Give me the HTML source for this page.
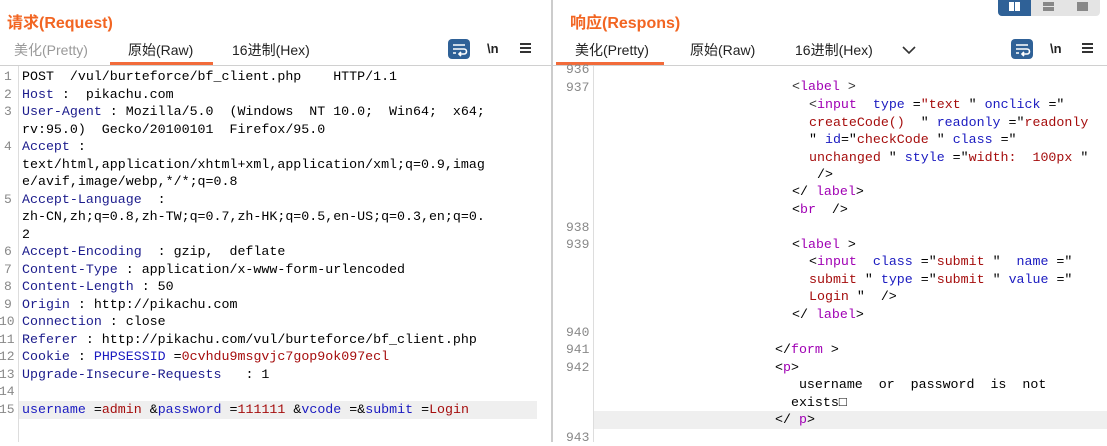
<!DOCTYPE html>
<html><head><meta charset="utf-8"><style>
*{margin:0;padding:0;box-sizing:border-box}
body{width:1107px;height:442px;background:#fff;position:relative;overflow:hidden;font-family:"Liberation Sans","Noto Sans CJK SC",sans-serif}
.abs{position:absolute}
.title{color:#f26522;font-weight:bold;font-size:16px;top:9px}
.tab{font-size:14px;top:40px;color:#222}
.code{font-family:"Liberation Mono",monospace;font-size:13.3px;white-space:pre;line-height:17.5px;position:absolute}
.ln{font-family:"Liberation Mono",monospace;font-size:13px;color:#888;position:absolute;line-height:17.5px}
.k{color:#1c1c8c}.v{color:#a50d0d}.t{color:#a000b4}.a{color:#1a1ac0}.p{color:#333}
.wrap{width:22px;height:20px;background:#2f6197;border-radius:4px}
</style></head><body>
<!-- left panel -->
<div class="abs title" style="left:7px">请求(Request)</div>
<div class="abs tab" style="left:14px;color:#999">美化(Pretty)</div>
<div class="abs tab" style="left:128px">原始(Raw)</div>
<div class="abs tab" style="left:232px">16进制(Hex)</div>
<div class="abs" style="left:110px;top:62px;width:103px;height:3px;background:#f26b3a"></div>
<div class="abs wrap" style="left:448px;top:39px"><svg width="22" height="20"><path d="M5 6h12M5 10h11a2.5 2.5 0 0 1 0 5h-5M13 13l-2 2 2 2M5 14h3" stroke="#fff" stroke-width="1.6" fill="none"/></svg></div>
<div class="abs" style="left:487px;top:41px;font-size:13px;font-weight:bold;color:#222">\n</div>
<div class="abs" style="left:520px;top:43px;width:11px;height:10px;border-top:2px solid #333;border-bottom:2px solid #333"><div style="margin-top:2px;height:2px;background:#333"></div></div>
<div class="abs" style="left:0;top:65px;width:552px;height:1px;background:#d0d0d0"></div>
<div class="abs" style="left:18px;top:66px;width:1px;height:376px;background:#ddd"></div>
<div class="abs" style="left:19px;top:401px;width:518px;height:18px;background:#efefef"></div>
<div class="abs" style="left:551px;top:0;width:2px;height:442px;background:#ccc"></div>
<div class="ln" style="left:4px;top:68px">1<br>2<br>3<br><br>4<br><br><br>5<br><br><br>6<br>7<br>8<br>9</div>
<div class="ln" style="left:-1px;top:313px">10<br>11<br>12<br>13<br>14<br>15</div>
<div class="code" style="left:22px;top:68px">POST  /vul/burteforce/bf_client.php    HTTP/1.1
<span class="k">Host</span> :  pikachu.com
<span class="k">User-Agent</span> : Mozilla/5.0  (Windows  NT 10.0;  Win64;  x64;
rv:95.0)  Gecko/20100101  Firefox/95.0
<span class="k">Accept</span> :
text/html,application/xhtml+xml,application/xml;q=0.9,imag
e/avif,image/webp,*/*;q=0.8
<span class="k">Accept-Language</span>  :
zh-CN,zh;q=0.8,zh-TW;q=0.7,zh-HK;q=0.5,en-US;q=0.3,en;q=0.
2
<span class="k">Accept-Encoding</span>  : gzip,  deflate
<span class="k">Content-Type</span> : application/x-www-form-urlencoded
<span class="k">Content-Length</span> : 50
<span class="k">Origin</span> : http://pikachu.com
<span class="k">Connection</span> : close
<span class="k">Referer</span> : http://pikachu.com/vul/burteforce/bf_client.php
<span class="k">Cookie</span> : <span class="a">PHPSESSID</span> =<span class="v">0cvhdu9msgvjc7gop9ok097ecl</span>
<span class="k">Upgrade-Insecure-Requests</span>   : 1

<span class="a">username</span> =<span class="v">admin</span> &amp;<span class="a">password</span> =<span class="v">111111</span> &amp;<span class="a">vcode</span> =&amp;<span class="a">submit</span> =<span class="v">Login</span></div>

<!-- right panel -->
<div class="abs" style="left:998px;top:0;width:102px;height:16px;background:#e4e4e4;border-radius:0 0 4px 4px"></div>
<div class="abs" style="left:998px;top:0;width:33px;height:16px;background:#2f6197;border-radius:0 0 0 4px"></div>
<div class="abs" style="left:1009px;top:2px;width:5px;height:9px;background:#fff"></div>
<div class="abs" style="left:1015px;top:2px;width:5px;height:9px;background:#fff"></div>
<div class="abs" style="left:1043px;top:2px;width:11px;height:4px;background:#888"></div>
<div class="abs" style="left:1043px;top:7px;width:11px;height:4px;background:#888"></div>
<div class="abs" style="left:1077px;top:2px;width:11px;height:9px;background:#888"></div>
<div class="abs title" style="left:570px">响应(Respons)</div>
<div class="abs tab" style="left:575px">美化(Pretty)</div>
<div class="abs tab" style="left:690px">原始(Raw)</div>
<div class="abs tab" style="left:795px">16进制(Hex)</div>
<div class="abs" style="left:901px;top:43px"><svg width="16" height="12"><path d="M2 3l6 6 6-6" stroke="#333" stroke-width="1.6" fill="none"/></svg></div>
<div class="abs" style="left:556px;top:62px;width:108px;height:3px;background:#f26b3a"></div>
<div class="abs wrap" style="left:1011px;top:39px"><svg width="22" height="20"><path d="M5 6h12M5 10h11a2.5 2.5 0 0 1 0 5h-5M13 13l-2 2 2 2M5 14h3" stroke="#fff" stroke-width="1.6" fill="none"/></svg></div>
<div class="abs" style="left:1050px;top:41px;font-size:13px;font-weight:bold;color:#222">\n</div>
<div class="abs" style="left:1082px;top:43px;width:11px;height:10px;border-top:2px solid #333;border-bottom:2px solid #333"><div style="margin-top:2px;height:2px;background:#333"></div></div>
<div class="abs" style="left:553px;top:65px;width:554px;height:1px;background:#d0d0d0"></div>
<div class="abs" style="left:593px;top:66px;width:1px;height:376px;background:#ddd"></div>
<div class="abs" style="left:594px;top:411px;width:513px;height:18px;background:#efefef"></div>
<div class="ln" style="left:566px;top:61px">936<br>937<br><br><br><br><br><br><br><br>938<br>939<br><br><br><br><br>940<br>941<br>942<br><br><br><br>943</div>
<div class="code" style="left:792px;top:78px"><span class="p">&lt;</span><span class="t">label</span> <span class="p">&gt;</span></div>
<div class="code" style="left:809px;top:96px"><span class="p">&lt;</span><span class="t">input</span>  <span class="a">type</span> =<span class="v">"text</span> " <span class="a">onclick</span> ="
<span class="v">createCode()</span>  " <span class="a">readonly</span> ="<span class="v">readonly</span>
" <span class="a">id</span>="<span class="v">checkCode</span> " <span class="a">class</span> ="
<span class="v">unchanged</span> " <span class="a">style</span> ="<span class="v">width:  100px</span> "
 /&gt;</div>
<div class="code" style="left:792px;top:183px">&lt;/ <span class="t">label</span>&gt;
&lt;<span class="t">br</span>  /&gt;

&lt;<span class="t">label</span> &gt;</div>
<div class="code" style="left:809px;top:253px">&lt;<span class="t">input</span>  <span class="a">class</span> ="<span class="v">submit</span> "  <span class="a">name</span> ="
<span class="v">submit</span> " <span class="a">type</span> ="<span class="v">submit</span> " <span class="a">value</span> ="
<span class="v">Login</span> "  /&gt;</div>
<div class="code" style="left:792px;top:306px">&lt;/ <span class="t">label</span>&gt;</div>
<div class="code" style="left:775px;top:341px">&lt;/<span class="t">form</span> &gt;
&lt;<span class="t">p</span>&gt;
   username  or  password  is  not
  exists&#9633;
&lt;/ <span class="t">p</span>&gt;</div>
</body></html>
